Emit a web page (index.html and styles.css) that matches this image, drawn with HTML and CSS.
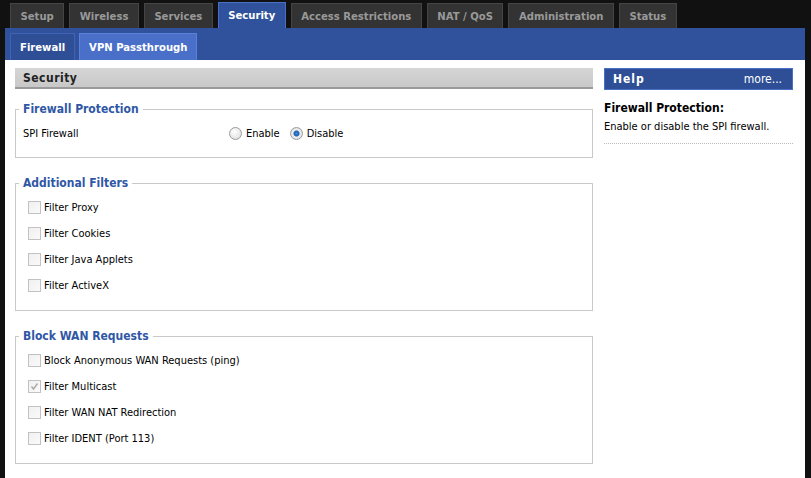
FILE: index.html
```html
<!DOCTYPE html>
<html lang="en">
<head>
    <meta charset="UTF-8">
    <title>Security</title>
    <link rel="stylesheet" href="styles.css">
</head>
<body>
    <div class="tabs">
        <div class="tab">Setup</div>
        <div class="tab">Wireless</div>
        <div class="tab">Services</div>
        <div class="tab active">Security</div>
        <div class="tab">Access Restrictions</div>
        <div class="tab">NAT / QoS</div>
        <div class="tab">Administration</div>
        <div class="tab">Status</div>
    </div>
    <div class="subbar">
        <div class="subtab current">Firewall</div>
        <div class="subtab">VPN Passthrough</div>
    </div>
    <div class="main">
        <div class="left">
            <h2 class="section-title">Security</h2>

            <fieldset>
                <legend>Firewall Protection</legend>
                <div class="setting">
                    <span class="label">SPI Firewall</span>
                    <span class="radio"></span><span class="opt">Enable</span>
                    <span class="radio on"></span><span class="opt">Disable</span>
                </div>
            </fieldset>

            <fieldset class="list">
                <legend>Additional Filters</legend>
                <div class="check"><span class="box"></span>Filter Proxy</div>
                <div class="check"><span class="box"></span>Filter Cookies</div>
                <div class="check"><span class="box"></span>Filter Java Applets</div>
                <div class="check"><span class="box"></span>Filter ActiveX</div>
            </fieldset>

            <fieldset class="list">
                <legend>Block WAN Requests</legend>
                <div class="check"><span class="box"></span>Block Anonymous WAN Requests (ping)</div>
                <div class="check"><span class="box"><svg width="11" height="11" viewBox="0 0 11 11"><path d="M2.5 5.5 L4.5 8 L8.5 2.5" fill="none" stroke="#a8a8a8" stroke-width="1.4"/></svg></span>Filter Multicast</div>
                <div class="check"><span class="box"></span>Filter WAN NAT Redirection</div>
                <div class="check"><span class="box"></span>Filter IDENT (Port 113)</div>
            </fieldset>
        </div>
        <div class="right">
            <div class="help-head"><span>Help</span><span class="more">more...</span></div>
            <div class="help-body">
                <b>Firewall Protection:</b>
                <p>Enable or disable the SPI firewall.</p>
            </div>
        </div>
    </div>
</body>
</html>
```

FILE: styles.css
```css
body {
    margin: 0;
    background: #111;
    font-family: "DejaVu Sans Condensed", "DejaVu Sans", sans-serif;
    font-size: 11px;
    color: #000;
    height: 478px;
    overflow: hidden;
}
.tabs {
    display: flex;
    align-items: flex-end;
    gap: 5px;
    height: 28px;
    padding-left: 10px;
}
.tab {
    background: #333;
    border: 1px solid #454545;
    border-bottom: none;
    color: #999;
    font-weight: bold;
    font-size: 11.2px;
    height: 24px;
    line-height: 25px;
    padding: 0 9.5px;
}
.tab.active {
    background: #30519b;
    border-color: #4a6fc8;
    color: #fff;
    height: 25px;
    line-height: 25px;
}
.subbar {
    display: flex;
    align-items: flex-end;
    gap: 4px;
    height: 32px;
    margin: 0 6px 0 5px;
    padding-left: 5px;
    background: #30519b;
}
.subtab {
    background: #4a6fc8;
    border: 1px solid #5a80d8;
    border-bottom: none;
    color: #fff;
    font-weight: bold;
    font-size: 11.2px;
    height: 26px;
    line-height: 27px;
    padding: 0 9px;
}
.subtab.current {
    background: #2e4f96;
    border-color: #4163b5;
}
.main {
    display: flex;
    background: #fff;
    margin: 0 6px 0 5px;
    padding: 8px 10px 0;
    height: 410px;
}
.left {
    width: 578px;
}
.section-title {
    margin: 0;
    height: 19px;
    line-height: 20px;
    padding-left: 8px;
    font-size: 12px;
    letter-spacing: 0.5px;
    color: #222;
    background: linear-gradient(#d6d6d6, #c8c8c8);
    border-bottom: 2px solid #9a9a9a;
}
fieldset {
    margin: 13px 0 0;
    padding: 7px 7px 15px;
    border: 1px solid #c9c9c9;
}
legend {
    margin-left: -4px;
    padding: 0 4px 1px;
    color: #2f57a5;
    font-weight: bold;
    font-size: 12px;
}
fieldset.list {
    margin-top: 18px;
    padding-top: 3px;
    padding-bottom: 12px;
}
.setting {
    display: flex;
    align-items: center;
    height: 18px;
}
.label {
    width: 206px;
}
.radio {
    width: 11px;
    height: 11px;
    border-radius: 50%;
    border: 1px solid #9c9c9c;
    background: radial-gradient(circle at 40% 35%, #fff, #d8d8d8);
    margin-right: 4px;
}
.radio.on {
    background: radial-gradient(circle, #3a8fe0 0, #1f5fb0 2.5px, #eee 3.5px, #d4d4d4 100%);
}
.opt {
    margin-right: 10px;
}
.check {
    display: flex;
    align-items: center;
    height: 26px;
    padding-left: 5px;
}
.box {
    width: 11px;
    height: 11px;
    border: 1px solid #c2c2c2;
    background: linear-gradient(135deg, #f0f0f0, #fafafa);
    margin-right: 3px;
    display: flex;
}
.right {
    width: 189px;
    margin-left: 11px;
}
.help-head {
    display: flex;
    justify-content: space-between;
    height: 20px;
    line-height: 20px;
    padding: 0 10px 0 8px;
    background: #2e4f96;
    border: 1px solid #4a6fc8;
    color: #fff;
    font-size: 12px;
}
.help-head span:first-child {
    font-weight: bold;
    letter-spacing: 1px;
}
.help-body {
    margin-top: 11px;
    padding-bottom: 10px;
    border-bottom: 1px dotted #bbb;
    font-size: 11px;
}
.help-body b {
    font-size: 12px;
}
.help-body p {
    margin: 5px 0 0;
}
```
